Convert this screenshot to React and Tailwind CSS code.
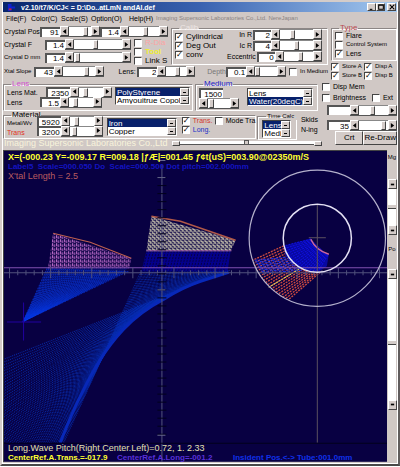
import React from "react";

const lerp = (a, b, t) => a + (b - a) * t;
const range = (n) => Array.from({ length: n }, (_, i) => i);

const bevel =
  "border border-t-white border-l-white border-r-[#444] border-b-[#444] bg-[#d4ccc9]";

const Num = ({ label, value, className = "w-5" }) => (
  <input
    aria-label={label}
    defaultValue={value}
    className={`h-[10px] shrink-0 border-t-2 border-l-2 border-[#555] bg-white px-px text-right text-[8px] leading-[8px] outline-none ${className}`}
  />
);

const Arrow = ({ dir, label }) => (
  <button
    type="button"
    aria-label={label}
    className={`flex h-[10px] w-[9px] shrink-0 items-center justify-center ${bevel}`}
  >
    <svg viewBox="0 0 6 6" className="h-[5px] w-[5px]">
      {dir === "left" && <path d="M5 0v6L1 3z" />}
      {dir === "right" && <path d="M1 0v6l4-3z" />}
      {dir === "bar" && <path d="M1 2h4v2H1z" />}
    </svg>
  </button>
);

const Scroll = ({ label, value, className = "" }) => (
  <div className={`flex min-w-0 border-b border-[#555] ${className}`}>
    <Arrow dir="left" label={`${label} down`} />
    <input
      type="range"
      aria-label={label}
      defaultValue={value}
      className="h-[10px] w-0 min-w-0 flex-1 appearance-none border-t border-[#888] bg-white [&::-webkit-slider-thumb]:h-[9px] [&::-webkit-slider-thumb]:w-[5px] [&::-webkit-slider-thumb]:appearance-none [&::-webkit-slider-thumb]:border [&::-webkit-slider-thumb]:border-t-white [&::-webkit-slider-thumb]:border-l-white [&::-webkit-slider-thumb]:border-r-[#444] [&::-webkit-slider-thumb]:border-b-[#444] [&::-webkit-slider-thumb]:bg-[#d4ccc9]"
    />
    <Arrow dir="right" label={`${label} up`} />
  </div>
);

const Check = ({ label, checked = false, className = "" }) => (
  <label
    className={`flex h-[9px] items-center gap-[3px] whitespace-nowrap ${className}`}
  >
    <input
      type="checkbox"
      defaultChecked={checked}
      className="h-2 w-2 shrink-0 appearance-none overflow-hidden border border-t-[#444] border-l-[#444] border-r-white border-b-white bg-white text-black checked:after:block checked:after:text-center checked:after:font-['DejaVu_Sans'] checked:after:text-[8px] checked:after:leading-[6px] checked:after:font-bold checked:after:content-['✓']"
    />
    {label}
  </label>
);

const List = ({ label, options, selected, className }) => (
  <div
    className={`flex h-[18px] overflow-hidden border border-t-[#444] border-l-[#444] border-r-white border-b-white bg-white ${className}`}
  >
    <select
      size={2}
      aria-label={label}
      defaultValue={selected}
      className="h-4 min-w-0 flex-1 overflow-hidden bg-white text-[8px] [scrollbar-width:none]"
    >
      {options.map((option) => (
        <option
          key={option}
          className="h-2 min-h-0 overflow-hidden px-px py-0 text-[8px] leading-[8px] text-black checked:bg-[#08216b] checked:bg-linear-to-r checked:from-[#08216b] checked:to-[#08216b] checked:text-white"
        >
          {option}
        </option>
      ))}
    </select>
    <div className="flex w-[9px] flex-col">
      {["previous", "next"].map((step) => (
        <button
          key={step}
          type="button"
          aria-label={`${label} ${step}`}
          className={`flex h-2 w-[9px] items-center justify-center ${bevel}`}
        >
          <span className="h-px w-[3px] bg-black" />
        </button>
      ))}
    </div>
  </div>
);

const Group = ({ title, titleClass = "text-[8px]", className = "", children }) => (
  <fieldset
    className={`min-w-0 border border-t-[#8c8685] border-l-[#8c8685] border-r-white border-b-white shadow-[inset_1px_1px_0_#fff] ${className}`}
  >
    <legend
      className={`ml-1 h-2 px-px leading-[8px] whitespace-nowrap ${titleClass}`}
    >
      {title}
    </legend>
    {children}
  </fieldset>
);

const TitleBar = () => (
  <header className="flex h-[10px] items-center bg-linear-to-r from-[#08246b] via-[#3a62b0] to-[#a6caf0] pr-px pl-1">
    <svg viewBox="0 0 10 10" className="h-[9px] w-[9px]">
      <path d="M1 1h4v3h4v2H5v3H1z" fill="#1020d0" />
      <path d="M2 6h3v2H2z" fill="#c02040" />
    </svg>
    <h1 className="ml-[5px] flex-1 text-[7px] leading-[9px] font-bold whitespace-pre text-white">
      v2.10/t7/K/CJ{"<"} = D:\Do..atLmN andAl.def
    </h1>
    {["M1 8h4", "M1 1h7v7H1zM1 2h7", "M1 1l7 7M8 1l-7 7"].map((d, i) => (
      <button
        key={d}
        type="button"
        aria-label={["Minimize", "Maximize", "Close"][i]}
        className={`flex h-2 w-[9px] items-center justify-center last:ml-[2px] ${bevel}`}
      >
        <svg viewBox="0 0 9 9" className="h-[6px] w-[6px]">
          <path d={d} fill="none" stroke="#000" strokeWidth="1.6" />
        </svg>
      </button>
    ))}
  </header>
);

const MenuBar = () => (
  <nav className="flex h-[13px] items-center pl-[3px] text-[7px] whitespace-nowrap">
    <a href="#file" className="w-[25px]">File(F)</a>
    <a href="#color" className="w-[30px]">Color(C)</a>
    <a href="#scale" className="w-[30px]">Scale(S)</a>
    <a href="#option" className="w-[38px]">Option(O)</a>
    <a href="#help" className="w-[27px]">Help(H)</a>
    <span className="text-[6px] text-[#8a8382]">
      Imaging Supersonic Laboratories Co.,Ltd. NereJapan
    </span>
  </nav>
);

const TopControls = () => (
  <div className="flex gap-[3px]">
    <div className="min-w-0 flex-1">
      <div className="flex gap-[3px]">
        <div className="flex w-[165px] shrink-0 flex-col gap-[2px] pl-px whitespace-nowrap">
          <div className="flex h-[11px] items-center">
            <span className="w-9 text-[7px]">Crystal Pos</span>
            <Num label="Crystal Pos" value="91" />
            <Scroll label="Crystal Pos" value={85} className="w-10" />
            <Num label="Crystal Pos 2" value="1.4" />
            <Scroll label="Crystal Pos fine" value={55} className="flex-1" />
          </div>
          <div className="flex">
            <div className="flex w-[127px] flex-col gap-[2px]">
              <div className="flex h-[11px] items-center">
                <span className="flex-1 text-[7px]">Crystal F</span>
                <Num label="Crystal F" value="1.4" />
                <Scroll label="Crystal F" value={45} className="w-[66px]" />
              </div>
              <div className="flex h-[11px] items-center">
                <span className="flex-1 text-[6px]">Crystal D mm</span>
                <Num label="Crystal D mm" value="1.4" />
                <Scroll label="Crystal D mm" value={3} className="w-[66px]" />
              </div>
            </div>
            <div className="-mt-px ml-[3px] flex flex-col text-[8px]">
              <Check label="R-Dia" className="text-[#fca4a4]" />
              <Check label="Tool" className="font-bold text-[#f0ee30]" />
              <Check label="Link S" />
            </div>
          </div>
        </div>
        <Group title="Calib" titleClass="text-[8px] text-[#eee6e4]" className="-mt-[2px] flex-1 pr-[5px] pl-[3px]">
          <div className="-mt-[3px] flex h-[34px]">
            <div className="flex w-[52px] flex-col pt-[3px]">
              <Check label="Cylindrical" checked />
              <Check label="Deg Out" checked />
              <Check label="conv" checked />
            </div>
            <div className="flex min-w-0 flex-1 flex-col">
              {[
                ["In R", "2", 35],
                ["Ic R", "4", 50],
                ["Eccentric", "0", 60],
              ].map(([label, value, pos]) => (
                <div key={label} className="flex h-[11px] items-center justify-end">
                  <span className="mr-px text-[7px]">{label}</span>
                  <Num label={label} value={value} className="w-[18px]" />
                  <Scroll label={label} value={pos} className="w-[51px]" />
                </div>
              ))}
            </div>
          </div>
        </Group>
      </div>
      <div className="mt-px flex h-[11px] items-center pl-px">
        <span className="w-[30px] text-[6px] whitespace-nowrap">Xtal Slope</span>
        <Num label="Xtal Slope" value="43" />
        <Scroll label="Xtal Slope" value={80} className="w-[50px]" />
        <span className="ml-[15px] w-[19px] text-[7px]">Lens:</span>
        <Num label="Lens" value="2" />
        <Scroll label="Lens" value={60} className="w-[38px]" />
        <span className="ml-3 w-[19px] text-[7px] text-[#777]">Depth</span>
        <Num label="Depth" value="0.1" />
        <Scroll label="Depth" value={0} className="w-10" />
        <Check label="In Medium" className="ml-[3px] text-[6px]" />
      </div>
    </div>
    <div className="w-[66px] shrink-0 text-[7px]">
      <Group title="Type" titleClass="text-[8px] text-[#b84a50]" className="-mt-[2px] h-[37px] pl-[3px]">
        <div className="-mt-px">
          <Check label="Flare" />
          <Check label="Control System" className="text-[6px]" />
          <Check label="Lens" checked />
        </div>
      </Group>
      <div className="mt-px grid grid-cols-2">
        <Check label="Store A" checked className="text-[6px]" />
        <Check label="Disp A" checked className="text-[6px]" />
        <Check label="Store B" checked className="text-[6px]" />
        <Check label="Disp B" checked className="text-[6px]" />
      </div>
    </div>
  </div>
);

const MaterialControls = () => (
  <div className="flex gap-1">
    <div className="min-w-0 flex-1">
      <div className="flex gap-[2px]">
        <Group title="Lens" titleClass="text-[8px] text-[#d050d0]" className="h-[31px] w-[190px] pl-[3px]">
          <div className="-mt-px flex">
            <div className="flex w-[105px] flex-col">
              <div className="flex h-[10px] items-center">
                <span className="flex-1 text-[7px]">Lens Mat.</span>
                <Num label="Lens material" value="2350" className="w-6" />
                <Scroll label="Lens material" value={22} className="w-[42px]" />
              </div>
              <div className="flex h-[10px] items-center">
                <span className="w-[33px] text-[7px]">Lens</span>
                <Num label="Lens thickness" value="1.5" />
                <Scroll label="Lens thickness" value={22} className="w-[42px]" />
              </div>
            </div>
            <List
              label="Lens material list"
              options={["PolyStyrene", "Amyouitrue Copolymer"]}
              selected="PolyStyrene"
              className="ml-[3px] w-[75px]"
            />
          </div>
        </Group>
        <Group title="Medium" titleClass="text-[8px] text-[#2020c8]" className="h-[31px] flex-1 pl-[3px]">
          <div className="flex items-start justify-between pr-1">
            <div className="flex w-10 flex-col">
              <Num label="Medium" value="1500" className="w-6" />
              <Scroll label="Medium" value={5} />
            </div>
            <List
              label="Medium list"
              options={["Lens", "Water(20degC)"]}
              selected="Water(20degC)"
              className="w-[66px]"
            />
          </div>
        </Group>
      </div>
      <div className="flex items-start">
        <Group title="Material" className="h-[28px] w-[257px] pl-[3px]">
          <div className="-mt-[3px] flex">
            <div className="flex w-[30px] flex-col pt-[3px] text-[6px]">
              <span>Metal/Wv</span>
              <span className="text-[7px] text-[#e03020]">Trans</span>
            </div>
            <div className="flex w-[66px] flex-col">
              <div className="flex h-[10px] items-center">
                <Num label="Longitudinal speed" value="5920" className="w-6" />
                <Scroll label="Longitudinal speed" value={22} className="w-[42px]" />
              </div>
              <div className="flex h-[10px] items-center">
                <Num label="Transverse speed" value="3200" className="w-6" />
                <Scroll label="Transverse speed" value={15} className="w-[42px]" />
              </div>
            </div>
            <List
              label="Material list"
              options={["Iron", "Copper"]}
              selected="Iron"
              className="mt-[2px] ml-1 w-[71px]"
            />
            <div className="ml-[5px]">
              <div className="flex">
                <Check label="Trans." checked className="w-[33px] text-[7px] text-[#d03830]" />
                <Check label="Mode Tra" className="text-[7px]" />
              </div>
              <Check label="Long." checked className="text-[7px] text-[#2030c8]" />
            </div>
          </div>
        </Group>
        <Group title="Time Calc." titleClass="text-[6px]" className="ml-px mt-px h-[28px] w-10 pl-1">
          <List
            label="Time calc list"
            options={["Lens", "Medium"]}
            selected="Lens"
            className="w-[29px]"
          />
        </Group>
        <div className="pt-1 pl-1 text-[7px] leading-[10px]">
          Skids
          <br />
          N-ing
        </div>
      </div>
    </div>
    <div className="flex w-[75px] shrink-0 flex-col pt-[2px] text-[7px]">
      <Check label="Disp Mem" />
      <div className="mt-[2px] flex justify-between pr-1">
        <Check label="Brightness" />
        <Check label="Ext" />
      </div>
      <div className="mt-[3px] flex pl-[5px]">
        <Num label="Brightness value" value="" className="w-[23px]" />
        <Scroll label="Brightness" value={45} className="flex-1" />
      </div>
      <div className="mt-1 flex pl-[5px]">
        <Num label="Ext value" value="35" className="w-[23px]" />
        <Scroll label="Ext" value={90} className="flex-1" />
      </div>
      <div className="flex pl-[13px] text-[8px]">
        <button type="button" className={`h-[14px] w-[29px] leading-[10px] ${bevel}`}>
          Crt
        </button>
        <button type="button" className={`h-[14px] flex-1 leading-[10px] whitespace-nowrap ${bevel}`}>
          Re-Draw
        </button>
      </div>
    </div>
  </div>
);

const fanRays = range(40).map((i) => {
  const t = i / 39;
  return [lerp(47, 128, t), lerp(269, 272, t)];
});

// refracted rays, steep on the left and flat on the right
const lensRays = range(58).map((i) => {
  const t = i / 57;
  const angle = (lerp(65.8, 21.5, t) * Math.PI) / 180;
  const x = lerp(141, 229, t);
  return [x, x - 320 * Math.cos(angle), 271 + 320 * Math.sin(angle), t];
});

const polar = (r, deg) => [
  316 + r * Math.cos((deg * Math.PI) / 180),
  239 + r * Math.sin((deg * Math.PI) / 180),
];

const tubeRays = range(20).map((i) => {
  const t = i / 19;
  return [...polar(34, lerp(167, 84, t)), ...polar(68, lerp(161, 115, t))];
});

const Plot = () => (
  <svg viewBox="4 152 382 310" className="block h-auto w-full">
    <defs>
      <pattern id="pink" width="4" height="4" patternUnits="userSpaceOnUse">
        <path d="M0 0h1v3H0zM2 1h1v3H2z" fill="#c070cc" />
        <path d="M1 2h1v1H1z" fill="#a050b4" />
      </pattern>
      <pattern id="cream" width="4" height="4" patternUnits="userSpaceOnUse">
        <path d="M0 0h1v3H0zM2 2h1v2H2zM2 0h1v1H2zM1 2h1v1H1z" fill="#fcf8cc" />
      </pattern>
      <clipPath id="view">
        <path d="M4 152h382v291H4z" />
      </clipPath>
    </defs>
    <rect x="4" y="152" width="382" height="310" fill="#080042" />

    <g clipPath="url(#view)">
      <g strokeWidth="1">
        {lensRays.map(([x, x2, y2, t]) => (
          <path
            key={x}
            d={`M${x} 271L${x2} ${y2}`}
            stroke="#0830b8"
            strokeOpacity={lerp(0.75, 0.9, t)}
            strokeDasharray="1 1"
          />
        ))}
      </g>
      <path
        d="M60 443Q74 408 80 397Q90 376 100 360Q110 344 123 330Q140 312 163 300Q182 288 200 282L228 273"
        fill="none"
        stroke="#0828b8"
        strokeWidth="3"
      />
      <path d="M146 252H230L227 272H141z" fill="#04008c" />
      {range(28).map((i) => (
        <path
          key={i}
          d={`M${147 + i * 3} 252L${142 + i * 3} 272`}
          stroke="#080048"
          strokeWidth="1"
          strokeDasharray="2 1"
        />
      ))}
    </g>

    <path d="M47 269H128L112 279L23 322z" fill="#0820a8" fillOpacity=".4" />
    {fanRays.map(([x, y]) => (
      <path key={x} d={`M${x} ${y}L23 322`} stroke="#0838e0" strokeWidth="1" strokeDasharray="2 1" strokeOpacity=".65" />
    ))}
    <path d="M7 322.5H41M23.500 303V341" stroke="#2000a0" />

    <path d="M53 234L131 259L129 269H48z" fill="url(#pink)" />
    <path d="M53 234L90 243L131 259" fill="none" stroke="#c06050" />
    <path d="M151 217L235 241L230 252H146z" fill="url(#cream)" />
    <path d="M151 217L180 222L235 241" fill="none" stroke="#b05848" strokeWidth="1.500" />
    <path d="M146 251.500H231" stroke="#90509c" />

    <g strokeWidth="1">
      {tubeRays.map(([x1, y1, x2, y2]) => (
        <path key={x1} d={`M${x1} ${y1}L${x2} ${y2}`} stroke="#d04c40" strokeWidth="1.3" strokeDasharray="2 1" />
      ))}
      <path d="M283 247L310 239Q315 251 328 255L326 267L317 273Q296 271 285 257z" fill="#0808a0" />
      {range(18).map((i) => {
        const t = i / 17;
        const [x, y] = polar(33, lerp(167, 88, t));
        return (
          <path
            key={i}
            d={`M${lerp(310, 327, t)} ${lerp(240, 256, t)}L${x} ${y}`}
            stroke="#1010e0"
            strokeDasharray="2 1"
          />
        );
      })}
      {range(9).map((i) => (
        <path
          key={i}
          d={`M${254 + i} ${261 + i * 1.6}L${286 + i * 2} ${258 + i * 1.6}`}
          stroke="#1830e8"
          strokeDasharray="3 1"
        />
      ))}
      <path d="M310 240Q315 251 328 255" fill="none" stroke="#d06898" strokeWidth="1.500" />
      <path d="M298 270L268 288" stroke="#e8e860" strokeDasharray="2 1" />
    </g>

    <path d="M4 268.500H386" stroke="#8050b0" />
    <path d="M4 273.500H386" stroke="#50507c" />
    <path d="M161.500 166V462" stroke="#54547c" />
    <path d="M316.500 205V443" stroke="#5c5060" />
    <path d="M308 238.500H325" stroke="#5c5060" />
    {range(46).map((i) => (
      <path
        key={i}
        d={`M${9.5 + i * 8.2} ${i % 5 ? 271 : 268}v${i % 5 ? 5 : 11}`}
        stroke="#50507c"
      />
    ))}
    {range(33).map((i) => (
      <path key={i} d={`M157 ${178.5 + i * 8}h9`} stroke="#02001c" />
    ))}
    {[161.5, 178.5, 290.5, 435.5].map((y) => (
      <path key={y} d={`M157 ${y}h8`} stroke="#66668c" />
    ))}
    <circle cx="316.500" cy="239" r="68" fill="none" stroke="#b4b0cc" strokeWidth="1.200" />
    <circle cx="316.500" cy="239" r="34" fill="none" stroke="#e4e0f4" strokeWidth="1.500" />
    <path d="M4 443.500H386" stroke="#02001c" />
  </svg>
);

const SideScroll = () => (
  <aside className="flex w-[10px] shrink-0 flex-col items-center overflow-hidden pt-[3px] text-[6px] leading-[8px]">
    <span>Mg</span>
    <div className="mt-[18px] flex h-[56px] w-2 flex-col items-center justify-between bg-white">
      <Arrow dir="bar" label="Magnify up" />
      <span className="h-1 w-2 border-b border-[#444] bg-[#d4ccc9]" />
      <Arrow dir="bar" label="Magnify down" />
    </div>
    <span className="mt-[10px]">Po</span>
    <div className="mt-4 mb-[52px] flex w-2 flex-1 flex-col items-center bg-white">
      <Arrow dir="bar" label="Position up" />
      <span className="h-[62px]" />
      <span className="h-1 w-2 border-b border-[#444] bg-[#d4ccc9]" />
      <span className="flex-1" />
      <Arrow dir="bar" label="Position down" />
    </div>
  </aside>
);

export default function App() {
  return (
    <main className="flex w-full flex-col border-2 border-t-[#d4ccc9] border-l-[#d4ccc9] border-r-[#605c5c] border-b-[#484848] bg-[#d0c8c5] font-['Liberation_Sans',Arial,sans-serif] text-[8px] leading-[9px] text-black">
      <div className="border-x border-b border-white pb-px">
        <TitleBar />
        <MenuBar />
        <section className="pt-px">
          <TopControls />
          <MaterialControls />
          <div className="-mt-[7px] mb-[2px] flex h-[10px] items-center gap-1 pr-[75px] pl-px">
            <h2 className="text-[9px] whitespace-nowrap text-[#f8f4dc]">
              Imaging Supersonic Laboratories Co.,Ltd
            </h2>
            <div className="flex flex-1 items-center">
              <span className={`h-[5px] w-2 ${bevel}`} />
              <input
                type="range"
                aria-label="Sweep"
                defaultValue={50}
                className="h-1 w-0 flex-1 appearance-none border-b border-[#555] bg-white [&::-webkit-slider-thumb]:h-[5px] [&::-webkit-slider-thumb]:w-[5px] [&::-webkit-slider-thumb]:appearance-none [&::-webkit-slider-thumb]:border [&::-webkit-slider-thumb]:border-[#555] [&::-webkit-slider-thumb]:bg-[#d4ccc9]"
              />
              <span className={`h-[5px] w-2 ${bevel}`} />
            </div>
          </div>
        </section>
        <section className="flex">
          <div className="relative min-w-0 flex-1 border-t border-l border-[#444] font-bold whitespace-nowrap">
            <Plot />
            <div className="absolute top-[1px] left-1">
              <p className="text-[9px] leading-[10px] text-[#ffff30]">
                X=(-000.23 Y=-009.17 R=009.18 |ƒÆ|=001.45 ƒ¢t(uS)=003.90@02350m/S
              </p>
              <p className="text-[8px] leading-[9px] text-[#1414c0]">
                Label5&nbsp; Scale=000.050 Do&nbsp; Scale=000.500 Dot pitch=002.000mm
              </p>
              <p className="text-[9px] leading-[10px] font-normal text-[#b85c60]">
                X'tal Length = 2.5
              </p>
            </div>
            <div className="absolute inset-x-1 bottom-0">
              <p className="text-[9px] leading-[9px] font-normal text-[#e4e0b0]">
                Long.Wave Pitch(Right.Center.Left)=0.72, 1. 2.33
              </p>
              <p className="flex text-[8px] leading-[9px]">
                <span className="w-[109px] text-[#ffff30]">
                  CenterRef.A.Trans.=-017.9
                </span>
                <span className="w-[116px] text-[#5830d8]">
                  CenterRef.A.Long=-001.2
                </span>
                <span className="text-[#1030e8]">
                  Insident Pos.{"<->"} Tube:001.0mm
                </span>
              </p>
            </div>
          </div>
          <SideScroll />
        </section>
      </div>
    </main>
  );
}
